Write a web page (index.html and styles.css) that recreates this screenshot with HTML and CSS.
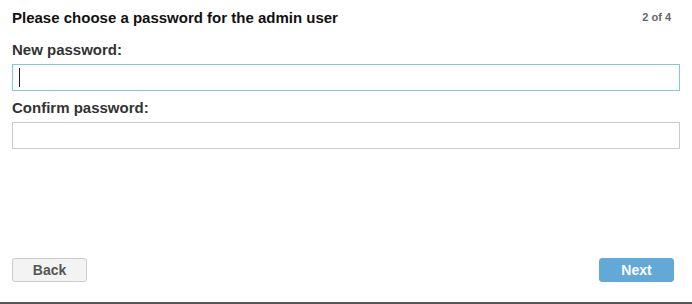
FILE: index.html
```html
<!DOCTYPE html>
<html lang="en">
<head>
    <meta charset="UTF-8">
    <meta name="viewport" content="width=device-width, initial-scale=1.0">
    <title>Setup - Admin password</title>
    <link rel="stylesheet" href="styles.css">
</head>
<body>

<div class="wizard">
    <div class="wizard-header">
        <h1>Please choose a password for the admin user</h1>
        <span class="step">2 of 4</span>
    </div>

    <form class="wizard-body" id="passwordForm">
        <div class="form-group">
            <label for="password">New password:</label>
            <div class="field">
                <input type="password" id="password" name="password" class="focused">
                <span class="caret"></span>
            </div>
        </div>
        <div class="form-group">
            <label for="confirm">Confirm password:</label>
            <div class="field">
                <input type="password" id="confirm" name="confirm">
            </div>
        </div>
    </form>

    <div class="wizard-footer">
        <button type="button" class="btn btn-back">Back</button>
        <button type="submit" form="passwordForm" class="btn btn-next">Next</button>
    </div>
</div>

</body>
</html>
```

FILE: styles.css
```css
html, body {
    margin: 0;
    padding: 0;
    background-color: #fff;
}
body {
    font-family: "Liberation Sans", Arial, sans-serif;
    color: #333;
}
.wizard {
    height: 302px;
    border-bottom: 2px solid #555;
    display: flex;
    flex-direction: column;
    padding: 0 12px;
}
.wizard-header {
    display: flex;
    justify-content: space-between;
    align-items: center;
    height: 34px;
    margin-bottom: -1px;
}
h1 {
    margin: 0;
    font-size: 15px;
    font-weight: bold;
    color: #111;
}
.step {
    font-size: 11px;
    font-weight: bold;
    color: #666;
    margin-right: 9px;
}
.wizard-body {
    flex: 1;
}
.form-group {
    margin-bottom: 6px;
}
label {
    display: block;
    font-size: 15px;
    font-weight: bold;
    line-height: 18px;
    margin: 8px 0 5px;
}
.field {
    position: relative;
}
input {
    display: block;
    width: 100%;
    height: 27px;
    margin: 0;
    padding: 0 6px;
    border: 1px solid #ccc;
    box-sizing: border-box;
    outline: none;
}
input.focused {
    border-color: #7fc7ea;
}
.caret {
    position: absolute;
    left: 7px;
    top: 4px;
    width: 1px;
    height: 19px;
    background-color: #222;
}
.wizard-footer {
    display: flex;
    justify-content: space-between;
    padding: 0 6px 20px 0;
}
.btn {
    width: 75px;
    height: 24px;
    border-radius: 3px;
    font-family: inherit;
    font-size: 14px;
    font-weight: bold;
    cursor: pointer;
    padding: 0;
}
.btn-back {
    background-color: #f3f3f3;
    border: 1px solid #ccc;
    color: #555;
}
.btn-next {
    background-color: #62a9d7;
    border: 1px solid #62a9d7;
    color: #fff;
}
```
